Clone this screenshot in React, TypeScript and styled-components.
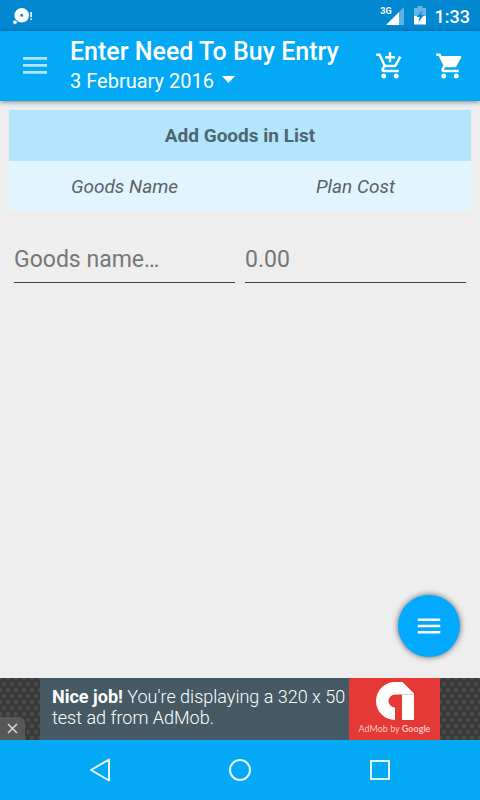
import React from "react";
import styled, { createGlobalStyle } from "styled-components";

const GlobalStyle = createGlobalStyle`
  *, *::before, *::after { box-sizing: border-box; }
  html, body { margin: 0; padding: 0; }
  body {
    background: #eeeeee;
    font-family: Roboto, "Noto Sans", sans-serif;
  }
  button, input { font-family: inherit; }
`;

const Screen = styled.div`
  display: flex;
  flex-direction: column;
  min-height: 100vh;
`;

const StatusBar = styled.div`
  display: flex;
  align-items: center;
  justify-content: space-between;
  height: 31px;
  padding: 0 10px 0 12px;
  background: #0288d1;
  color: #ffffff;
`;

const StatusIcons = styled.div`
  display: flex;
  align-items: center;
`;

const StatusSignal = styled.span`
  display: flex;
  margin: 0 10px 0 -6px;
`;

const Clock = styled.time`
  margin-left: 9px;
  font-size: 18px;
  font-weight: 500;
  line-height: 24px;
  padding-top: 2px;
`;

const NetworkLabel = styled.span`
  align-self: flex-start;
  padding-top: 2px;
  font-size: 9px;
  font-weight: 700;
  line-height: 12px;
`;

const Toolbar = styled.header`
  display: flex;
  align-items: center;
  height: 70px;
  padding-right: 15px;
  background: #03a9f4;
  color: #ffffff;
  box-shadow: 0 1px 5px rgba(0, 0, 0, 0.45);
`;

const IconButton = styled.button<{ $width: number }>`
  display: flex;
  align-items: center;
  justify-content: center;
  flex: none;
  width: ${(p) => p.$width}px;
  height: 60px;
  padding: 0;
  border: 0;
  background: none;
  color: inherit;
  cursor: pointer;
`;

const Heading = styled.div`
  flex: 1;
  min-width: 0;
`;

const Title = styled.h1`
  margin: 0;
  font-size: 25px;
  font-weight: 500;
  line-height: 30px;
  white-space: nowrap;
`;

const DateButton = styled.button`
  display: flex;
  align-items: center;
  gap: 8px;
  padding: 0;
  border: 0;
  background: none;
  color: inherit;
  font-size: 20px;
  line-height: 28px;
  cursor: pointer;

  svg { margin-bottom: 4px; }
`;

const ToolbarActions = styled.div`
  display: flex;
  gap: 30px;
`;

const Content = styled.main`
  display: flex;
  flex-direction: column;
  flex: 1;
  padding: 9px 9px 21px;
`;

const GoodsTable = styled.table`
  width: 100%;
  border-collapse: collapse;
  table-layout: fixed;
`;

const TableTitle = styled.th`
  height: 51px;
  padding: 0;
  background: #b3e5fc;
  font-size: 19px;
  font-weight: 700;
  color: #4f666f;
`;

const ColumnName = styled.th`
  height: 50px;
  padding: 0;
  background: #e1f5fe;
  font-size: 19px;
  font-style: italic;
  font-weight: 400;
  color: #5b6266;
`;

const FieldCell = styled.td`
  padding: 24px 5px 0;
`;

const Field = styled.input`
  display: block;
  width: 100%;
  height: 48px;
  padding: 2px 0 0;
  border: 0;
  border-bottom: 1px solid #433f43;
  border-radius: 0;
  outline: none;
  background: transparent;
  font-size: 23px;
  color: #333333;

  &::placeholder {
    color: #777777;
    opacity: 1;
  }
`;

const MenuFab = styled.button`
  display: flex;
  align-items: center;
  justify-content: center;
  width: 62px;
  height: 62px;
  margin: auto 11px 0 auto;
  padding: 0;
  border: 0;
  border-radius: 50%;
  background: #03a9ff;
  color: #ffffff;
  box-shadow: 0 0 6px rgba(0, 0, 0, 0.6);
  cursor: pointer;
`;

const AdStrip = styled.aside`
  position: relative;
  display: flex;
  justify-content: center;
  height: 62px;
  background-color: #383838;
  background-image:
    radial-gradient(circle, #4a4a4a 2px, transparent 3px),
    radial-gradient(circle, #4a4a4a 2px, transparent 3px);
  background-size: 8px 12px;
  background-position: 0 0, 4px 6px;
`;

const AdLink = styled.a`
  display: flex;
  width: 400px;
  color: #ffffff;
  text-decoration: none;
`;

const AdText = styled.p`
  flex: 1;
  margin: 0;
  padding: 8px 0 0 12px;
  background: #455a64;
  font-size: 18px;
  font-weight: 300;
  line-height: 21px;
  white-space: nowrap;

  strong { font-weight: 700; }
`;

const AdBrand = styled.span`
  display: flex;
  flex-direction: column;
  align-items: center;
  width: 91px;
  padding-top: 4px;
  background: #e53935;
  font-family: Lato, sans-serif;
  font-size: 9px;
  line-height: 18px;
  color: #f8c4c2;
  white-space: nowrap;

  b { font-weight: 700; }
`;

const AdClose = styled.button`
  position: absolute;
  left: 0;
  bottom: 0;
  display: flex;
  align-items: center;
  justify-content: center;
  width: 25px;
  height: 23px;
  padding: 0;
  border: 0;
  border-radius: 0 6px 0 0;
  background: #585858;
  color: #d6d6d6;
  cursor: pointer;
`;

const SystemNav = styled.nav`
  display: flex;
  justify-content: center;
  height: 60px;
  background: #03a9f4;
  color: #e6f6fe;
`;

const CartPath = "M7 18c-1.1 0-1.99.9-1.99 2S5.9 22 7 22s2-.9 2-2-.9-2-2-2zM1 2v2h2l3.6 7.59-1.35 2.45c-.16.28-.25.61-.25.96 0 1.1.9 2 2 2h12v-2H7.42c-.14 0-.25-.11-.25-.25l.03-.12.9-1.63h7.45c.75 0 1.41-.41 1.75-1.03l3.58-6.49c.08-.14.12-.31.12-.48 0-.55-.45-1-1-1H5.21l-.94-2H1zm16 16c-1.1 0-1.99.9-1.99 2s.89 2 1.99 2 2-.9 2-2-.9-2-2-2z";
const AddCartPath = "M11 9h2V6h3V4h-3V1h-2v3H8v2h3v3zm-4 9c-1.1 0-1.99.9-1.99 2S5.9 22 7 22s2-.9 2-2-.9-2-2-2zm10 0c-1.1 0-1.99.9-1.99 2s.89 2 1.99 2 2-.9 2-2-.9-2-2-2zm-9.83-3.25l.03-.12.9-1.63h7.45c.75 0 1.41-.41 1.75-1.03l3.86-7.01L19.42 4h-.01l-1.1 2-2.76 5H8.53l-.13-.27L6.16 6l-.95-2-.94-2H1v2h2l3.6 7.59-1.35 2.45c-.16.28-.25.61-.25.96 0 1.1.9 2 2 2h12v-2H7.42c-.13 0-.25-.11-.25-.25z";

function ActionIcon({ d }: { d: string }) {
  return (
    <svg width="30" height="30" viewBox="0 0 24 24" fill="currentColor" aria-hidden="true">
      <path d={d} />
    </svg>
  );
}

function DiscAlertIcon() {
  return (
    <svg width="21" height="18" viewBox="0 0 21 18" fill="#ffffff" aria-label="Disc notification">
      <path
        fillRule="evenodd"
        d="M9.700 1a7.300 7.300 0 1 0 0 14.600 7.300 7.300 0 0 0 0-14.600zM9.700 6.800a1.500 1.500 0 1 1 0 3 1.500 1.500 0 0 1 0-3z"
      />
      <circle cx="3" cy="15.200" r="2.300" stroke="#0288d1" strokeWidth="0.800" />
      <path d="M18.300 5h1.600v5.200h-1.600zM18.300 11.500h1.600v1.600h-1.600z" />
    </svg>
  );
}

function SignalIcon() {
  return (
    <svg width="18" height="18" viewBox="0 0 18 18" aria-label="Signal strength">
      <path d="M13 5 18 0v18h-5z" fill="#5db5e4" />
      <path d="M0 18 13 5v13z" fill="#ffffff" />
    </svg>
  );
}

function BatteryIcon() {
  return (
    <svg width="12" height="19" viewBox="0 0 12 19" aria-label="Battery charging">
      <path d="M3.500 0h5v2H12v8H0V2h3.500z" fill="#62b6e2" />
      <path d="M0 10h12v8.500H0z" fill="#ffffff" />
      <path d="M8.500 4.500 2.500 11h3.200l-1.500 5.500L10 9H6.800z" fill="#0288d1" />
    </svg>
  );
}

export default function App() {
  return (
    <>
      <GlobalStyle />
      <Screen>
        <StatusBar>
          <DiscAlertIcon />
          <StatusIcons>
            <NetworkLabel>3G</NetworkLabel>
            <StatusSignal>
              <SignalIcon />
            </StatusSignal>
            <BatteryIcon />
            <Clock>1:33</Clock>
          </StatusIcons>
        </StatusBar>

        <Toolbar>
          <IconButton $width={70} aria-label="Open navigation">
            <svg width="24" height="18" viewBox="0 0 24 18" fill="#ffffff" fillOpacity="0.7">
              <path d="M0 0h24v2.700H0zM0 7h24v2.700H0zM0 14h24v2.700H0z" />
            </svg>
          </IconButton>
          <Heading>
            <Title>Enter Need To Buy Entry</Title>
            <DateButton>
              3 February 2016
              <svg width="13" height="7" viewBox="0 0 13 7" fill="currentColor" aria-hidden="true">
                <path d="M0 0h13L6.500 7z" />
              </svg>
            </DateButton>
          </Heading>
          <ToolbarActions>
            <IconButton $width={30} aria-label="Add to cart">
              <ActionIcon d={AddCartPath} />
            </IconButton>
            <IconButton $width={30} aria-label="Open cart">
              <ActionIcon d={CartPath} />
            </IconButton>
          </ToolbarActions>
        </Toolbar>

        <Content>
          <GoodsTable>
            <thead>
              <tr>
                <TableTitle colSpan={2}>Add Goods in List</TableTitle>
              </tr>
              <tr>
                <ColumnName scope="col" id="goods-name">Goods Name</ColumnName>
                <ColumnName scope="col" id="plan-cost">Plan Cost</ColumnName>
              </tr>
            </thead>
            <tbody>
              <tr>
                <FieldCell>
                  <Field type="text" placeholder="Goods name…" aria-labelledby="goods-name" />
                </FieldCell>
                <FieldCell>
                  <Field type="text" inputMode="decimal" placeholder="0.00" aria-labelledby="plan-cost" />
                </FieldCell>
              </tr>
            </tbody>
          </GoodsTable>
          <MenuFab aria-label="Open actions">
            <svg width="30" height="30" viewBox="0 0 24 24" fill="currentColor">
              <path d="M3 18h18v-2H3v2zm0-5h18v-2H3v2zm0-7v2h18V6H3z" />
            </svg>
          </MenuFab>
        </Content>

        <AdStrip>
          <AdLink href="#">
            <AdText>
              <strong>Nice job!</strong> You're displaying a 320 x 50
              <br />
              test ad from AdMob.
            </AdText>
            <AdBrand>
              <svg width="38" height="38" viewBox="0 0 38 38" fill="#ffffff" aria-hidden="true">
                <path d="M19 0h7.500L38 11.500V38H26V12.500h-7a6.500 6.500 0 0 0 0 13V38A19 19 0 0 1 19 0z" />
                <path d="M26 12.500h12" stroke="#c9c9c9" strokeWidth="0.800" />
              </svg>
              <span>AdMob by <b>Google</b></span>
            </AdBrand>
          </AdLink>
          <AdClose aria-label="Close ad">
            <svg width="11" height="11" viewBox="0 0 11 11" stroke="currentColor" strokeWidth="1.600">
              <path d="M1 1l9 9M10 1l-9 9" />
            </svg>
          </AdClose>
        </AdStrip>

        <SystemNav aria-label="System">
          <IconButton $width={140} aria-label="Back">
            <svg width="24" height="26" viewBox="0 0 24 26" fill="none" stroke="currentColor" strokeWidth="2" strokeLinejoin="round">
              <path d="M3 13 21 2.500v21z" />
            </svg>
          </IconButton>
          <IconButton $width={140} aria-label="Home">
            <svg width="24" height="24" viewBox="0 0 24 24" fill="none" stroke="currentColor" strokeWidth="2">
              <circle cx="12" cy="12" r="10" />
            </svg>
          </IconButton>
          <IconButton $width={140} aria-label="Recent apps">
            <svg width="24" height="24" viewBox="0 0 24 24" fill="none" stroke="currentColor" strokeWidth="2" strokeLinejoin="round">
              <path d="M3 3h18v18H3z" />
            </svg>
          </IconButton>
        </SystemNav>
      </Screen>
    </>
  );
}
